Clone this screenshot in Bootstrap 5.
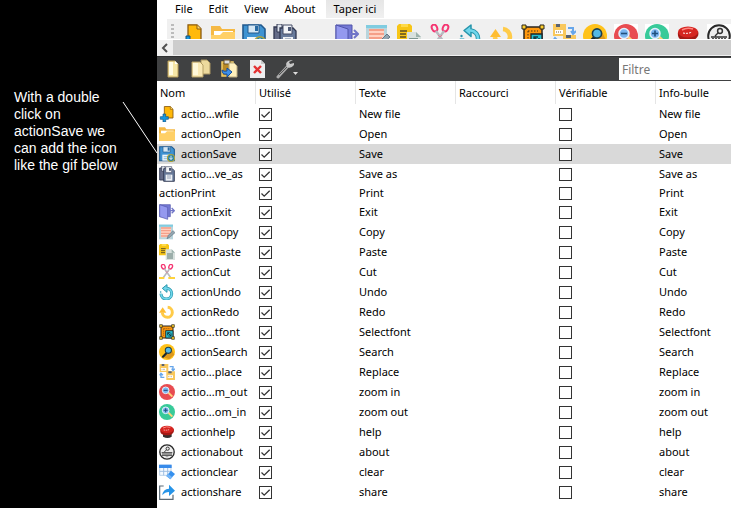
<!DOCTYPE html>
<html lang="fr">
<head>
<meta charset="utf-8">
<meta name="viewport" content="width=device-width, initial-scale=1">
<title>Action editor</title>
<link href="https://cdn.jsdelivr.net/npm/bootstrap@5.3.0/dist/css/bootstrap.min.css" rel="stylesheet">
<style>
body{font-family:"Noto Sans","Open Sans",sans-serif;font-size:11px;line-height:18px;color:#000;background:#fff}
.note{flex:0 0 157px;background:#000;color:#fff;font:14px/17px "Liberation Sans",Arial,sans-serif;padding:89px 34px 0 14px;position:relative}
.pointer{position:absolute;left:122px;top:101px}
.menus{height:19px;padding-left:11px}
.menus button{border:0;background:none;padding:0 7px;margin-right:2px}
.menus .type-here{background:linear-gradient(#e6e6e6,#f0f0f0);margin:0 0 0 1px;padding:0 8px}
.tools{height:21px;margin-left:10px;background:#f0f0f0;border-bottom:1px solid #fff;padding:5px 0 0 4px;overflow:hidden}
.grip{width:3px;height:16px;flex:none;margin-right:6px;background:repeating-linear-gradient(#bbb 0 2px,#f0f0f0 2px 4px)}
.tools button{border:0;background:none;padding:0;margin-right:7px;width:24px;height:24px;flex:none}
.tools svg,.darkbar svg,.acts svg{display:block;flex:none}
.scroller{height:16px;background:#cdcdcd;border-bottom:1px solid #f0f0f0}
.scroller button{width:16px;border:0;padding:0;background:#f0f0f0}
.darkbar{height:25px;background:#404142;border-top:1px solid #303132}
.darkbar button{border:0;background:none;padding:0;width:20px;height:20px;flex:none}
.edits{padding-left:6px}
.darkbar input{width:112px;height:22px;border:0;border-radius:0;padding:0 3px;font-size:12px;outline:0;background:#fff}
.darkbar input::placeholder{color:#777}
.acts{table-layout:fixed;width:100%;border-collapse:separate;border-spacing:0}
.acts th{height:23px;font-weight:400;padding:0 0 0 3px;border-right:1px solid #e5e5e5}
.acts th:last-child{border-right:0}
.acts td{height:20px;padding:0 0 0 3px;line-height:16px;white-space:nowrap}
.acts td:first-child{padding-left:2px}
.acts .plain td{height:18px}
.acts .chosen{background:#d9d9d9}
.acts .c-name{width:99px}.acts .c-mid{width:100px}
.acts .cap{margin-left:6px}
.acts input{appearance:none;display:block;width:13px;height:13px;margin:0;border:1px solid #333;background:#fff}
.acts input:checked{background:#fff url("data:image/svg+xml,%3Csvg xmlns='http://www.w3.org/2000/svg' viewBox='0 0 11 11'%3E%3Cpath d='M1.5 5.5 4.2 8.2 9.7 2.7' fill='none' stroke='%23333' stroke-width='1.3'/%3E%3C/svg%3E")}
</style>
</head>
<body class="overflow-hidden">
<svg class="d-none" aria-hidden="true">
<symbol id="new" viewBox="0 0 24 24"><path d="M8 .8h9l4 4V18H8z" fill="#ffb90a" stroke="#8a5b12" stroke-width="1.3"/><path d="M17 1v4h4" fill="#ffdc70" stroke="#8a5b12"/><path d="M6 12h4v4h4v4h-4v4H6v-4H2v-4h4z" fill="#1597e0" stroke="#13507c"/></symbol>
<symbol id="open" viewBox="0 0 24 24"><path d="M0 2h9l2 3h13v17H0z" fill="#f5b945"/><path d="M3 7h19v6H3z" fill="#fff"/><path d="M0 11h9l3-3h12v14H0z" fill="#ffd067"/></symbol>
<symbol id="save" viewBox="0 0 24 24"><path d="M1 1h18l4 4v17H1z" fill="#3f93d2" stroke="#225a8e" stroke-width="1.6"/><path d="M6 1h11v8H6z" fill="#d5e7f4" stroke="#225a8e"/><path d="M13 2h3v5h-3z" fill="#2769a2"/><path d="M5 13h13v9H5z" fill="#eef5fa"/><path d="M7 16h7m-7 3h6" stroke="#5ba2d5"/><circle cx="18" cy="18" r="5.3" fill="#2381a6" stroke="#b0a23a" stroke-width="1.6"/><path d="M18 14.5v5m-2.5-2 2.5 3 2.5-3" fill="none" stroke="#fff" stroke-width="1.3"/></symbol>
<symbol id="saveas" viewBox="0 0 24 24"><path d="M1 3h12v18H1z" fill="#656c88" stroke="#303750" stroke-width="1.3"/><path d="M4 0h5v8H4z" fill="#dce2eb" stroke="#303750"/><path d="M7 4h13l3 3v16H7z" fill="#687b9c" stroke="#303750" stroke-width="1.3"/><path d="M10 1h9v9h-9z" fill="#f2f4f8" stroke="#454c66"/><path d="M15 3h3v4h-3z" fill="#4d5975"/><path d="M10 13h10v9H10z" fill="#eef1f5"/><path d="M12 15h6m-6 3h6" stroke="#70809a"/></symbol>
<symbol id="exit" viewBox="0 0 24 24"><path d="M1 1h16v18H1z" fill="#7479d5" stroke="#5054aa"/><path d="m1 1 12 4v18L1 19z" fill="#9499ef" stroke="#5054aa"/><path d="M15 10h8m-4-4 4 4-4 4" fill="none" stroke="#7176c8" stroke-width="2"/></symbol>
<symbol id="copy" viewBox="0 0 24 24"><path d="M0 1h21v22H0z" fill="#b8d5dd"/><path d="M0 1h21v3H0z" fill="#80cce0"/><path d="M3 5h15v15H3z" fill="#ffd1c1"/><path d="M3 6h15M3 10h15M3 14h13M3 18h11" stroke="#f59f88" stroke-width="2"/><path d="m12 22 2-5 7-7 3 3-8 7z" fill="#92a5b0" stroke="#647785"/></symbol>
<symbol id="paste" viewBox="0 0 24 24"><path d="M0 2 2 0h11l2 2v15H0z" fill="#f7c516"/><path d="M4 0h7v3H4z" fill="#ffda49"/><path d="M3 7h7m-7 3h6m-6 3h6" stroke="#594d25" stroke-width="1.4"/><path d="M10 8h9l5 5v11H10z" fill="#d8e1de"/><path d="M19 8v5h5" fill="#9cb2ad"/><path d="M12 15h9m-9 3h9m-9 3h9" stroke="#607d78" stroke-width="1.5"/></symbol>
<symbol id="cut" viewBox="0 0 24 24"><g fill="none" stroke="#f53672" stroke-width="2"><ellipse cx="6.5" cy="4" rx="2.6" ry="3.5" transform="rotate(-25 6.5 4)"/><ellipse cx="17.5" cy="4" rx="2.6" ry="3.5" transform="rotate(25 17.5 4)"/></g><path d="m8 7 10 14M16 7 6 21" stroke="#b7bac0" stroke-width="2.4"/><path d="m10 11 2 2 2-2" stroke="#e77091" fill="none"/><path d="M0 21h8m6 0h10" stroke="#ffd33c" stroke-width="3"/></symbol>
<symbol id="undo" viewBox="0 0 24 24"><path d="M12 6.500a8 8 0 1 1-9 8" fill="none" stroke="#2694ab" stroke-width="4.500"/><path d="m12 1-7 5.500 7 6z" fill="#70d6eb" stroke="#2694ab" stroke-width="1.5" stroke-linejoin="round"/><path d="M10 6.500h2a8 8 0 1 1-9 8" fill="none" stroke="#70d6eb" stroke-width="2.600"/><circle cx="2.500" cy="12" r="1.2" fill="#2694ab"/></symbol>
<symbol id="redo" viewBox="0 0 24 24"><path d="M13 5a7.500 7.500 0 1 1-8 8" fill="none" stroke="#ffcb48" stroke-width="4.500"/><path d="M0 13 5.500 5l5.500 8z" fill="#ffbd32"/></symbol>
<symbol id="font" viewBox="0 0 24 24"><path d="M3 3h18v18H3z" fill="#ff980e" stroke="#28251f" stroke-width="1.5"/><path d="M7 7h10M7 7v11" stroke="#483316" stroke-dasharray="1.5"/><path d="M10 10h11v11H10z" fill="#25bed0" stroke="#202527" stroke-width="1.3"/><path d="m13 13 5 5m-5-1v-4h4m-3 5h4v-4" fill="none" stroke="#183943" stroke-width="1.4"/><path d="M1 1h4v4H1zM19 1h4v4h-4zM1 19h4v4H1zM19 19h4v4h-4z" fill="#ffcf2c" stroke="#292519"/></symbol>
<symbol id="replace" viewBox="0 0 24 24"><path d="M1 0h13v12H1zM11 11h13v13H11z" fill="#f9c85c"/><path d="M4 0h4v3H4zM14 11h5v3h-5z" fill="#596270"/><path d="M3 6h8v4H3zM13 17h8v4h-8z" fill="#fff"/><path d="M4 8h6m4 11h6" stroke="#755d38" stroke-dasharray="1"/><path d="M16 4h5v5m-2-2 2 3 3-3M8 20H3v-5m-2 2 2-3 3 3" fill="none" stroke="#67a6ea" stroke-width="2"/></symbol>
<symbol id="search" viewBox="0 0 24 24"><circle cx="12" cy="12" r="12" fill="#ffc21a"/><path d="m12 14 6-8 5 10-8 7-8-3z" fill="#dd981c"/><path d="m11 14-5 5" stroke="#1c292d" stroke-width="3.3" stroke-linecap="round"/><circle cx="14" cy="9.5" r="4.600" fill="#53b9e5" stroke="#1b3f4d" stroke-width="1.6"/></symbol>
<symbol id="zoomout" viewBox="0 0 24 24"><path d="M0 0h24v24H0z" fill="#fff"/><circle cx="12" cy="12" r="12" fill="#e84c51"/><path d="m14 13 6 6" stroke="#ffd27b" stroke-width="3"/><circle cx="10" cy="9.5" r="5" fill="#79b4ef" stroke="#e3f0fb" stroke-width="1.5"/><path d="M7 9.5h6" stroke="#20507e" stroke-width="1.6"/></symbol>
<symbol id="zoomin" viewBox="0 0 24 24"><path d="M0 0h24v24H0z" fill="#fff"/><circle cx="12" cy="12" r="12" fill="#38ca99"/><path d="m14 13 6 6" stroke="#ffd27b" stroke-width="3"/><circle cx="10" cy="9.5" r="5" fill="#79b4ef" stroke="#e3f0fb" stroke-width="1.5"/><path d="M7 9.5h6M10 6.5v6" stroke="#20507e" stroke-width="1.6"/></symbol>
<symbol id="help" viewBox="0 0 24 24"><path d="M6 14h13v5q-6 4-13 0z" fill="#35302f"/><path d="M2 8c-1 7 3 9 10 9s12-4 10-10z" fill="#a51915"/><ellipse cx="12" cy="8" rx="10" ry="5.5" fill="#d52520"/><path d="M6 6q5-3 11-1" fill="none" stroke="#ff8680" stroke-width="1.5"/><path d="M7 9q5 1 9-1" fill="none" stroke="#fff" stroke-dasharray="2 1"/></symbol>
<symbol id="about" viewBox="0 0 24 24"><path d="M0 0h24v24H0z" fill="#fff"/><circle cx="12" cy="12" r="10.8" fill="#eee" stroke="#292929" stroke-width="2"/><circle cx="13" cy="7" r="2.4" fill="none" stroke="#333" stroke-width="1.5"/><path d="M11 9 8 12M4 13h16M4 17h16" stroke="#333" stroke-width="1.4"/><path d="M5 15h14" stroke="#555" stroke-width="2" stroke-dasharray="2 1"/><path d="M10 19h4" stroke="#777"/></symbol>
<symbol id="clear" viewBox="0 0 24 24"><path d="M1 2h17v15H1z" fill="#f5faff" stroke="#9abbe0"/><path d="M0 1h19v5H0z" fill="#388bea"/><path d="M1 11h17M7 6v11M13 6v11" stroke="#9abbe0" stroke-width="1.4"/><path d="m11 18 7-8 6 5-7 8z" fill="#3690ee"/><path d="m11 18 3-3 6 5-3 3z" fill="#74b5f7"/></symbol>
<symbol id="share" viewBox="0 0 24 24"><path d="M7 3H1v20h20v-7" fill="none" stroke="#5b6a76" stroke-width="1.8"/><path d="M5 17q1-10 10-10V1l9 9-9 8v-6q-6 0-10 5z" fill="#2694e8"/></symbol>
<symbol id="sheet" viewBox="0 0 20 20"><path d="M5 2h7l3 3v13H5z" fill="#f6e6a6" stroke="#b99e5b"/><path d="M6 3h4v13H6z" fill="#fffbe4"/><path d="M12 2v3h3z" fill="#fff"/></symbol>
<symbol id="sheets" viewBox="0 0 20 20"><path d="M10 1h6l3 3v11h-9z" fill="#edda9d" stroke="#a99560"/><path d="M1 3h8l3 3v12H1z" fill="#fae9b4" stroke="#b6a066"/><path d="M2 4h5v12H2z" fill="#fff8da"/></symbol>
<symbol id="clip" viewBox="0 0 20 20"><path d="M3 3h11v14H3z" fill="#b98a26" stroke="#f3cf68" stroke-width="1.5"/><path d="M5 1h6v4H5z" fill="#ddd" stroke="#665127"/><path d="M10 4h5l3 3v11h-8z" fill="#fff0bd" stroke="#b8aa7e"/><path d="M3 11q2 2 5 1V9l5 4-5 5v-3q-5 1-5-4" fill="#3e90ea" stroke="#174f9d"/></symbol>
<symbol id="del" viewBox="0 0 20 20"><path d="M3 1h11l4 4v14H3z" fill="#eeeeef"/><path d="M14 1v4h4" fill="#c8c8c8"/><path d="m7 7 7 7m0-7-7 7" stroke="#e43233" stroke-width="2.4"/></symbol>
<symbol id="wrench" viewBox="0 0 26 20"><path d="m3 18 10-11" stroke="#aaa" stroke-width="3" stroke-linecap="round"/><path d="M18 1q-6 0-7 4l1 3q4 2 7-2V4l-4 1-1-2z" fill="#c6c6c6"/><path d="m4 16 8-8" stroke="#555"/><path d="M18 13h5l-2.5 3z" fill="#ddd"/></symbol>
</svg>
<div class="d-flex min-vh-100">
  <aside class="note">
    <p class="mb-0">With a double click on actionSave we can add the icon like the gif below</p>
    <svg class="pointer" width="35" height="52" aria-hidden="true"><path d="m1 1 34 51" stroke="#fff" fill="none"/></svg>
  </aside>
  <main class="flex-grow-1 overflow-hidden">
    <nav class="menus d-flex align-items-start" aria-label="Menu">
      <button>File</button><button>Edit</button><button>View</button><button>About</button><button class="type-here">Taper ici</button>
    </nav>
    <div class="tools d-flex" id="tools"><span class="grip"></span></div>
    <div class="scroller d-flex"><button aria-label="Défiler à gauche"><svg class="d-block mx-auto" width="8" height="10" viewBox="0 0 8 10"><path d="M6 1 2 5l4 4" fill="none" stroke="#505050" stroke-width="2"/></svg></button></div>
    <div class="darkbar d-flex align-items-center">
      <div class="edits d-flex flex-grow-1" id="editTools"></div>
      <input type="text" placeholder="Filtre" aria-label="Filtre">
    </div>
    <table class="acts">
      <colgroup><col class="c-name"><col class="c-mid"><col class="c-mid"><col class="c-mid"><col class="c-mid"><col></colgroup>
      <thead><tr><th>Nom</th><th>Utilisé</th><th>Texte</th><th>Raccourci</th><th>Vérifiable</th><th>Info-bulle</th></tr></thead>
      <tbody id="rows"></tbody>
    </table>
  </main>
</div>
<script>
const actions = [
  ['new','actio...wfile','New file'],['open','actionOpen','Open'],['save','actionSave','Save'],
  ['saveas','actio...ve_as','Save as'],['','actionPrint','Print'],['exit','actionExit','Exit'],
  ['copy','actionCopy','Copy'],['paste','actionPaste','Paste'],['cut','actionCut','Cut'],
  ['undo','actionUndo','Undo'],['redo','actionRedo','Redo'],['font','actio...tfont','Selectfont'],
  ['search','actionSearch','Search'],['replace','actio...place','Replace'],['zoomout','actio...m_out','zoom in'],
  ['zoomin','actio...om_in','zoom out'],['help','actionhelp','help'],['about','actionabout','about'],
  ['clear','actionclear','clear'],['share','actionshare','share']
];
const icon = (id, w, h = w) => `<svg width="${w}" height="${h}" aria-hidden="true"><use href="#${id}"/></svg>`;
document.getElementById('rows').innerHTML = actions.map(([id, name, text]) => `
  <tr class="${id === 'save' ? 'chosen' : id ? '' : 'plain'}">
    <td><div class="d-flex align-items-center">${id ? icon(id, 16) : ''}<span class="${id ? 'cap' : ''}">${name}</span></div></td>
    <td><input type="checkbox" checked aria-label="Utilisé : ${name}"></td>
    <td>${text}</td><td></td>
    <td><input type="checkbox" aria-label="Vérifiable : ${name}"></td>
    <td>${text}</td>
  </tr>`).join('');
const order = ['new','open','save','saveas','','exit','copy','paste','cut','undo','redo','font','replace','search','zoomout','zoomin','help','about'];
document.getElementById('tools').insertAdjacentHTML('beforeend',
  order.map(id => `<button aria-label="${id || 'print'}">${id ? icon(id, 24) : ''}</button>`).join(''));
document.getElementById('editTools').innerHTML = ['sheet','sheets','clip','del','wrench'].map(id =>
  `<button class="me-2" aria-label="${id}">${id === 'wrench' ? icon(id, 26, 20) : icon(id, 20)}</button>`).join('');
</script>
<script src="https://cdn.jsdelivr.net/npm/bootstrap@5.3.0/dist/js/bootstrap.bundle.min.js"></script>
</body>
</html>
